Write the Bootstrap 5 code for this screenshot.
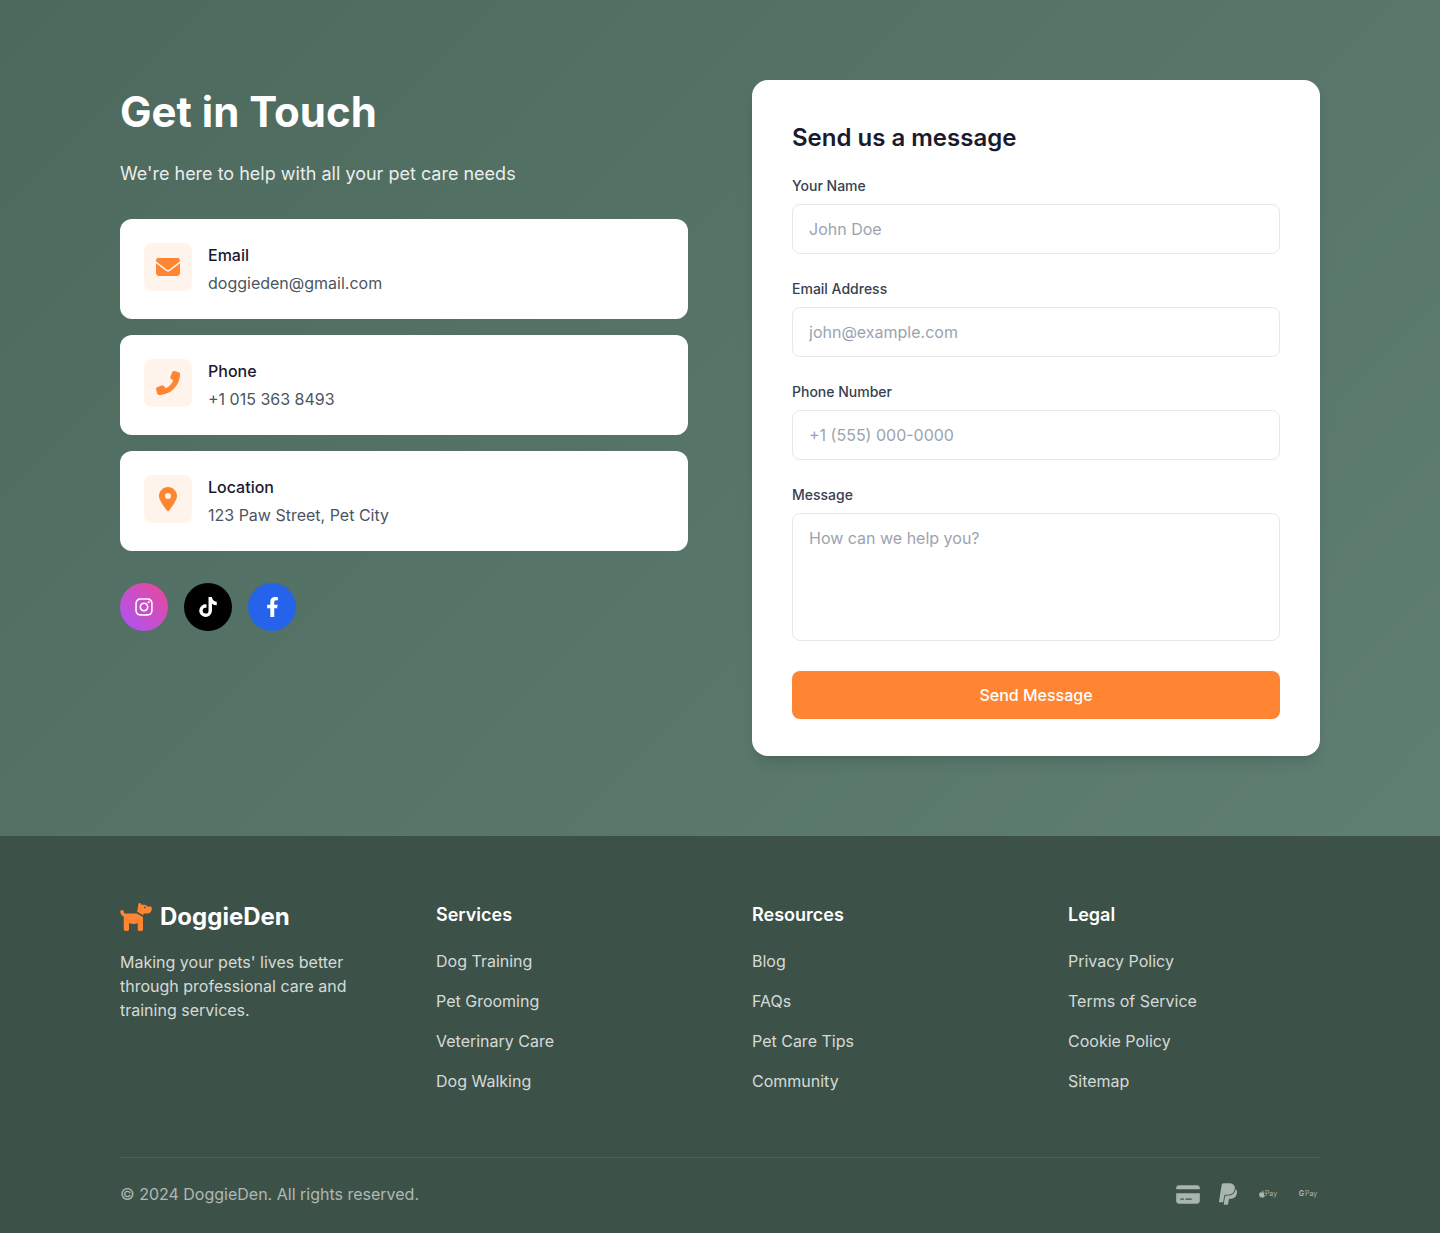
<!DOCTYPE html>
<html lang="en">
<head>
<meta charset="utf-8">
<title>DoggieDen - Contact</title>
<link href="https://cdn.jsdelivr.net/npm/bootstrap@5.3.0/dist/css/bootstrap.min.css" rel="stylesheet">
<style>
body{font-family:"Inter","Liberation Sans",sans-serif;font-size:16px;line-height:1.5;background:#3c5147;}
.contact-zone{background:linear-gradient(135deg,#4d695d 0%,#5f7f72 100%);padding:80px 120px;height:756px;height:836px;}
.contact-row{--bs-gutter-x:64px;--bs-gutter-y:0;}
.hero-title{font-size:42px;line-height:64px;font-weight:700;color:#fff;margin:0 0 16px;}
.hero-sub{font-size:18px;line-height:27px;color:rgba(255,255,255,.9);margin:0 0 32px;}
.info-card{border:0;border-radius:12px;padding:24px;margin-bottom:16px;height:100px;}
.info-icon{width:48px;height:48px;border-radius:8px;background:#fff4eb;flex:none;}
.info-name{font-weight:500;color:#1a1a2e;margin:0 0 4px;}
.info-value{color:#4b5563;margin:0;}
.social-row{margin-top:32px;}
.social-dot{width:48px;height:48px;flex:none;color:#fff;}
.ig-dot{background:linear-gradient(45deg,#a855f7,#ec4899);}
.tt-dot{background:#000;}
.fb-dot{background:#2563eb;}
.form-box{border:0;border-radius:16px;padding:40px;height:676px;box-shadow:0 10px 15px -3px rgba(0,0,0,.1),0 4px 6px -4px rgba(0,0,0,.1);}
.form-title{font-size:24px;line-height:36px;font-weight:600;color:#1a1a2e;margin:0 0 19px;}
.field-label{font-size:14px;line-height:21px;font-weight:500;color:#374151;margin:0 0 8px;display:block;}
.field-input{height:50px;padding:12px 16px;font-size:16px;line-height:24px;border:1px solid #e5e7eb;border-radius:8px;margin-bottom:24px;color:#1a1a2e;}
.field-input::placeholder{color:#9ca3af;}
.field-area{height:128px;margin-bottom:30px;resize:none;}
.send-btn{height:48px;background:#ff8533;border:0;border-radius:8px;color:#fff;font-size:16px;font-weight:500;}
.site-foot{background:#3c5147;padding:64px 120px 24px;height:397px;}
.foot-row{--bs-gutter-x:64px;--bs-gutter-y:0;margin-bottom:48px;}
.brand-line{height:34px;margin-bottom:16px;}
.brand-name{font-size:24px;line-height:34px;font-weight:700;color:#fff;}
.brand-copy{color:rgba(255,255,255,.8);margin:0;}
.foot-head{font-size:18px;line-height:28px;font-weight:600;color:#fff;margin:1px 0 20px;}
.foot-link{display:block;color:rgba(255,255,255,.8);text-decoration:none;margin-bottom:16px;}
.foot-bottom{border-top:1px solid rgba(255,255,255,.1);padding-top:24px;}
.copy-line{color:rgba(255,255,255,.6);margin:0;}
.pay-mark{width:24px;height:24px;flex:none;color:#a8b6af;}
.pay-word{font-size:7px;line-height:24px;white-space:nowrap;color:#a8b6af;}
.pay-g{font-weight:700;margin-right:1px;}
</style>
</head>
<body>
<section class="contact-zone">
  <div class="row contact-row">
    <div class="col-6">
      <h1 class="hero-title">Get in Touch</h1>
      <p class="hero-sub">We're here to help with all your pet care needs</p>

      <div class="card info-card flex-row gap-3">
        <div class="info-icon d-flex align-items-center justify-content-center">
          <svg width="24" height="24" viewBox="0 0 512 512" fill="#ff8533"><path d="M48 64C21.500 64 0 85.500 0 112c0 15.100 7.100 29.300 19.200 38.400L236.800 313.600c11.400 8.500 27 8.500 38.400 0L492.800 150.400c12.100-9.100 19.200-23.300 19.200-38.400c0-26.500-21.500-48-48-48H48zM0 176V384c0 35.300 28.700 64 64 64H448c35.300 0 64-28.700 64-64V176L294.400 339.200c-22.800 17.100-54 17.100-76.800 0L0 176z"/></svg>
        </div>
        <div>
          <p class="info-name">Email</p>
          <p class="info-value">doggieden@gmail.com</p>
        </div>
      </div>

      <div class="card info-card flex-row gap-3">
        <div class="info-icon d-flex align-items-center justify-content-center">
          <svg width="24" height="24" viewBox="0 0 512 512" fill="#ff8533"><path transform="matrix(-1 0 0 1 512 0)" d="M164.900 24.600c-7.700-18.600-28-28.500-47.400-23.200l-88 24C12.100 30.200 0 46 0 64C0 311.400 200.600 512 448 512c18 0 33.800-12.100 38.600-29.500l24-88c5.300-19.400-4.600-39.700-23.200-47.400l-96-40c-16.300-6.800-35.200-2.100-46.300 11.600L304.700 368C234.300 334.700 177.300 277.700 144 207.300L193.300 167c13.700-11.200 18.400-30 11.600-46.300l-40-96z"/></svg>
        </div>
        <div>
          <p class="info-name">Phone</p>
          <p class="info-value">+1 015 363 8493</p>
        </div>
      </div>

      <div class="card info-card flex-row gap-3">
        <div class="info-icon d-flex align-items-center justify-content-center">
          <svg width="18" height="24" viewBox="0 0 384 512" fill="#ff8533"><path d="M215.700 499.200C267 435 384 279.400 384 192C384 86 298 0 192 0S0 86 0 192c0 87.400 117 243 168.300 307.200c12.300 15.300 35.100 15.300 47.400 0zM192 128a64 64 0 1 1 0 128 64 64 0 1 1 0-128z"/></svg>
        </div>
        <div>
          <p class="info-name">Location</p>
          <p class="info-value">123 Paw Street, Pet City</p>
        </div>
      </div>

      <div class="d-flex gap-3 social-row">
        <a href="#" class="social-dot ig-dot rounded-circle d-flex align-items-center justify-content-center" aria-label="Instagram">
          <svg width="18" height="20" viewBox="0 0 448 512" fill="currentColor"><path d="M224.100 141c-63.600 0-114.900 51.300-114.900 114.900s51.300 114.900 114.900 114.900S339 319.500 339 255.900 287.700 141 224.100 141zm0 189.600c-41.100 0-74.700-33.500-74.700-74.700s33.500-74.700 74.700-74.700 74.700 33.500 74.700 74.700-33.600 74.700-74.700 74.700zm146.400-194.300c0 14.900-12 26.800-26.800 26.800-14.900 0-26.800-12-26.800-26.800s12-26.800 26.800-26.800 26.800 12 26.800 26.800zm76.100 27.200c-1.700-35.900-9.900-67.700-36.200-93.900-26.200-26.200-58-34.400-93.900-36.200-37-2.100-147.900-2.100-184.900 0-35.800 1.700-67.600 9.900-93.900 36.100s-34.400 58-36.200 93.900c-2.100 37-2.100 147.900 0 184.900 1.700 35.900 9.900 67.700 36.200 93.900s58 34.400 93.900 36.200c37 2.100 147.900 2.100 184.900 0 35.900-1.700 67.700-9.900 93.900-36.200 26.200-26.200 34.400-58 36.200-93.900 2.100-37 2.100-147.800 0-184.800zM398.800 388c-7.800 19.600-22.900 34.700-42.600 42.600-29.500 11.700-99.500 9-132.100 9s-102.700 2.600-132.100-9c-19.600-7.800-34.700-22.900-42.600-42.600-11.700-29.500-9-99.500-9-132.100s-2.600-102.700 9-132.100c7.800-19.600 22.900-34.700 42.600-42.600 29.500-11.700 99.500-9 132.100-9s102.700-2.600 132.100 9c19.600 7.800 34.700 22.900 42.600 42.600 11.700 29.500 9 99.500 9 132.100s2.700 102.700-9 132.100z"/></svg>
        </a>
        <a href="#" class="social-dot tt-dot rounded-circle d-flex align-items-center justify-content-center" aria-label="TikTok">
          <svg width="18" height="20" viewBox="0 0 448 512" fill="currentColor"><path d="M448 209.910a210.060 210.060 0 0 1-122.770-39.250V349.380A162.550 162.550 0 1 1 185 188.310V278.200a74.620 74.620 0 1 0 52.230 71.180V0l88 0a121.180 121.180 0 0 0 1.860 22.170h0A122.180 122.180 0 0 0 381 102.390a121.430 121.430 0 0 0 67 20.140z"/></svg>
        </a>
        <a href="#" class="social-dot fb-dot rounded-circle d-flex align-items-center justify-content-center" aria-label="Facebook">
          <svg width="13" height="20" viewBox="0 0 320 512" fill="currentColor"><path d="M279.140 288l14.220-92.660h-88.910v-60.130c0-25.350 12.420-50.060 52.240-50.060h40.420V6.260S260.430 0 225.360 0c-73.220 0-121.080 44.380-121.080 124.720v70.620H22.890V288h81.390v224h100.170V288z"/></svg>
        </a>
      </div>
    </div>

    <div class="col-6">
      <div class="card form-box">
        <h2 class="form-title">Send us a message</h2>
        <form>
          <label class="field-label" for="f-name">Your Name</label>
          <input id="f-name" class="form-control field-input" type="text" placeholder="John Doe">
          <label class="field-label" for="f-mail">Email Address</label>
          <input id="f-mail" class="form-control field-input" type="email" placeholder="john@example.com">
          <label class="field-label" for="f-tel">Phone Number</label>
          <input id="f-tel" class="form-control field-input" type="tel" placeholder="+1 (555) 000-0000">
          <label class="field-label" for="f-msg">Message</label>
          <textarea id="f-msg" class="form-control field-input field-area" placeholder="How can we help you?"></textarea>
          <button type="button" class="btn send-btn w-100">Send Message</button>
        </form>
      </div>
    </div>
  </div>
</section>

<footer class="site-foot">
  <div class="row foot-row">
    <div class="col-3">
      <div class="d-flex align-items-center gap-2 brand-line">
        <svg width="32" height="28" viewBox="0 0 576 512" fill="#ff8533"><path d="M309.600 158.500L332.700 19.800C334.600 8.400 344.500 0 356.100 0c7.500 0 14.500 3.500 19 9.500L392 32h52.100c12.700 0 24.900 5.100 33.900 14.100L496 64h56c13.300 0 24 10.700 24 24v24c0 44.200-35.800 80-80 80H464 448 426.700l-5.100 30.500-112-64zM416 256.100L416 480c0 17.700-14.300 32-32 32H352c-17.700 0-32-14.300-32-32V364.800c-24 12.300-51.200 19.200-80 19.200s-56-6.900-80-19.200V480c0 17.700-14.300 32-32 32H96c-17.700 0-32-14.300-32-32V249.800c-28.800-10.900-51.400-35.300-59.200-66.500L1 167.800c-4.300-17.100 6.100-34.500 23.300-38.800s34.500 6.100 38.800 23.300l3.900 15.500C70.500 182 83.300 192 98 192h30 16H303.800L416 256.100zM464 80a16 16 0 1 0 -32 0 16 16 0 1 0 32 0z"/></svg>
        <span class="brand-name">DoggieDen</span>
      </div>
      <p class="brand-copy">Making your pets' lives better through professional care and training services.</p>
    </div>
    <div class="col-3">
      <h3 class="foot-head">Services</h3>
      <a class="foot-link" href="#">Dog Training</a>
      <a class="foot-link" href="#">Pet Grooming</a>
      <a class="foot-link" href="#">Veterinary Care</a>
      <a class="foot-link" href="#">Dog Walking</a>
    </div>
    <div class="col-3">
      <h3 class="foot-head">Resources</h3>
      <a class="foot-link" href="#">Blog</a>
      <a class="foot-link" href="#">FAQs</a>
      <a class="foot-link" href="#">Pet Care Tips</a>
      <a class="foot-link" href="#">Community</a>
    </div>
    <div class="col-3">
      <h3 class="foot-head">Legal</h3>
      <a class="foot-link" href="#">Privacy Policy</a>
      <a class="foot-link" href="#">Terms of Service</a>
      <a class="foot-link" href="#">Cookie Policy</a>
      <a class="foot-link" href="#">Sitemap</a>
    </div>
  </div>
  <div class="foot-bottom d-flex justify-content-between align-items-center">
    <p class="copy-line">© 2024 DoggieDen. All rights reserved.</p>
    <div class="d-flex gap-3">
      <div class="pay-mark d-flex align-items-center justify-content-center">
        <svg width="24" height="21" viewBox="0 0 576 512" fill="currentColor"><path d="M64 32C28.700 32 0 60.700 0 96v32H576V96c0-35.300-28.700-64-64-64H64zM576 224H0V416c0 35.300 28.700 64 64 64H512c35.300 0 64-28.700 64-64V224zM112 352h64c8.800 0 16 7.200 16 16s-7.200 16-16 16H112c-8.800 0-16-7.200-16-16s7.200-16 16-16zm112 16c0-8.800 7.200-16 16-16H368c8.800 0 16 7.200 16 16s-7.200 16-16 16H240c-8.800 0-16-7.200-16-16z"/></svg>
      </div>
      <div class="pay-mark d-flex align-items-center justify-content-center">
        <svg width="18" height="24" viewBox="0 0 384 512" fill="currentColor"><path d="M111.400 295.900c-3.500 19.200-17.400 108.700-21.500 134-.3 1.800-1 2.500-3 2.500H12.300c-7.600 0-13.100-6.600-12.100-13.900L58.800 46.600C60.300 37 68.900 29.500 79 29.500c152.300 0 165.100-3.700 204 11.400 60.100 23.300 65.600 79.500 44 140.300-21.500 62.600-72.500 89.500-140.100 90.300-43.400.7-69.500-7-75.500 24.400zM357.100 152c-1.800-1.300-2.500-1.800-3 1.300-2 11.400-5.100 22.500-8.800 33.600-39.900 113.800-150.500 103.900-204.500 103.900-6.100 0-10.100 3.300-10.900 9.400-22.600 140.400-27.100 169.700-27.100 169.700-1 7.100 3.500 12.900 10.600 12.900h63.500c8.600 0 15.700-6.300 17.400-14.900.7-5.400-1.100 6.100 14.400-91.300 4.600-22 14.300-19.700 29.300-19.700 71 0 126.400-28.800 142.900-112.300 6.500-34.800 4.600-71.400-23.300-92.500z"/></svg>
      </div>
      <div class="pay-mark d-flex align-items-center justify-content-center pay-word">
        <svg width="6" height="8" viewBox="0 0 384 512" fill="currentColor"><path d="M318.700 268.700c-.2-36.700 16.400-64.400 50-84.800-18.800-26.900-47.200-41.700-84.700-44.600-35.500-2.800-74.300 20.700-88.500 20.700-15 0-49.400-19.700-76.400-19.700C63.300 141.200 4 184.800 4 273.500q0 39.300 14.400 81.200c12.800 36.700 59 126.700 107.200 125.200 25.200-.6 43-17.900 75.800-17.900 31.800 0 48.300 17.900 76.400 17.900 48.600-.7 90.400-82.500 102.600-119.300-65.200-30.700-61.700-90-61.700-91.900zm-56.600-164.200c27.300-32.400 24.800-61.900 24-72.500-24.100 1.400-52 16.400-67.900 34.900-17.500 19.800-27.800 44.300-25.600 71.900 26.100 2 49.900-11.400 69.500-34.300z"/></svg><span>Pay</span>
      </div>
      <div class="pay-mark d-flex align-items-center justify-content-center pay-word">
        <span class="pay-g">G</span><span>Pay</span>
      </div>
    </div>
  </div>
</footer>
</body>
</html>
